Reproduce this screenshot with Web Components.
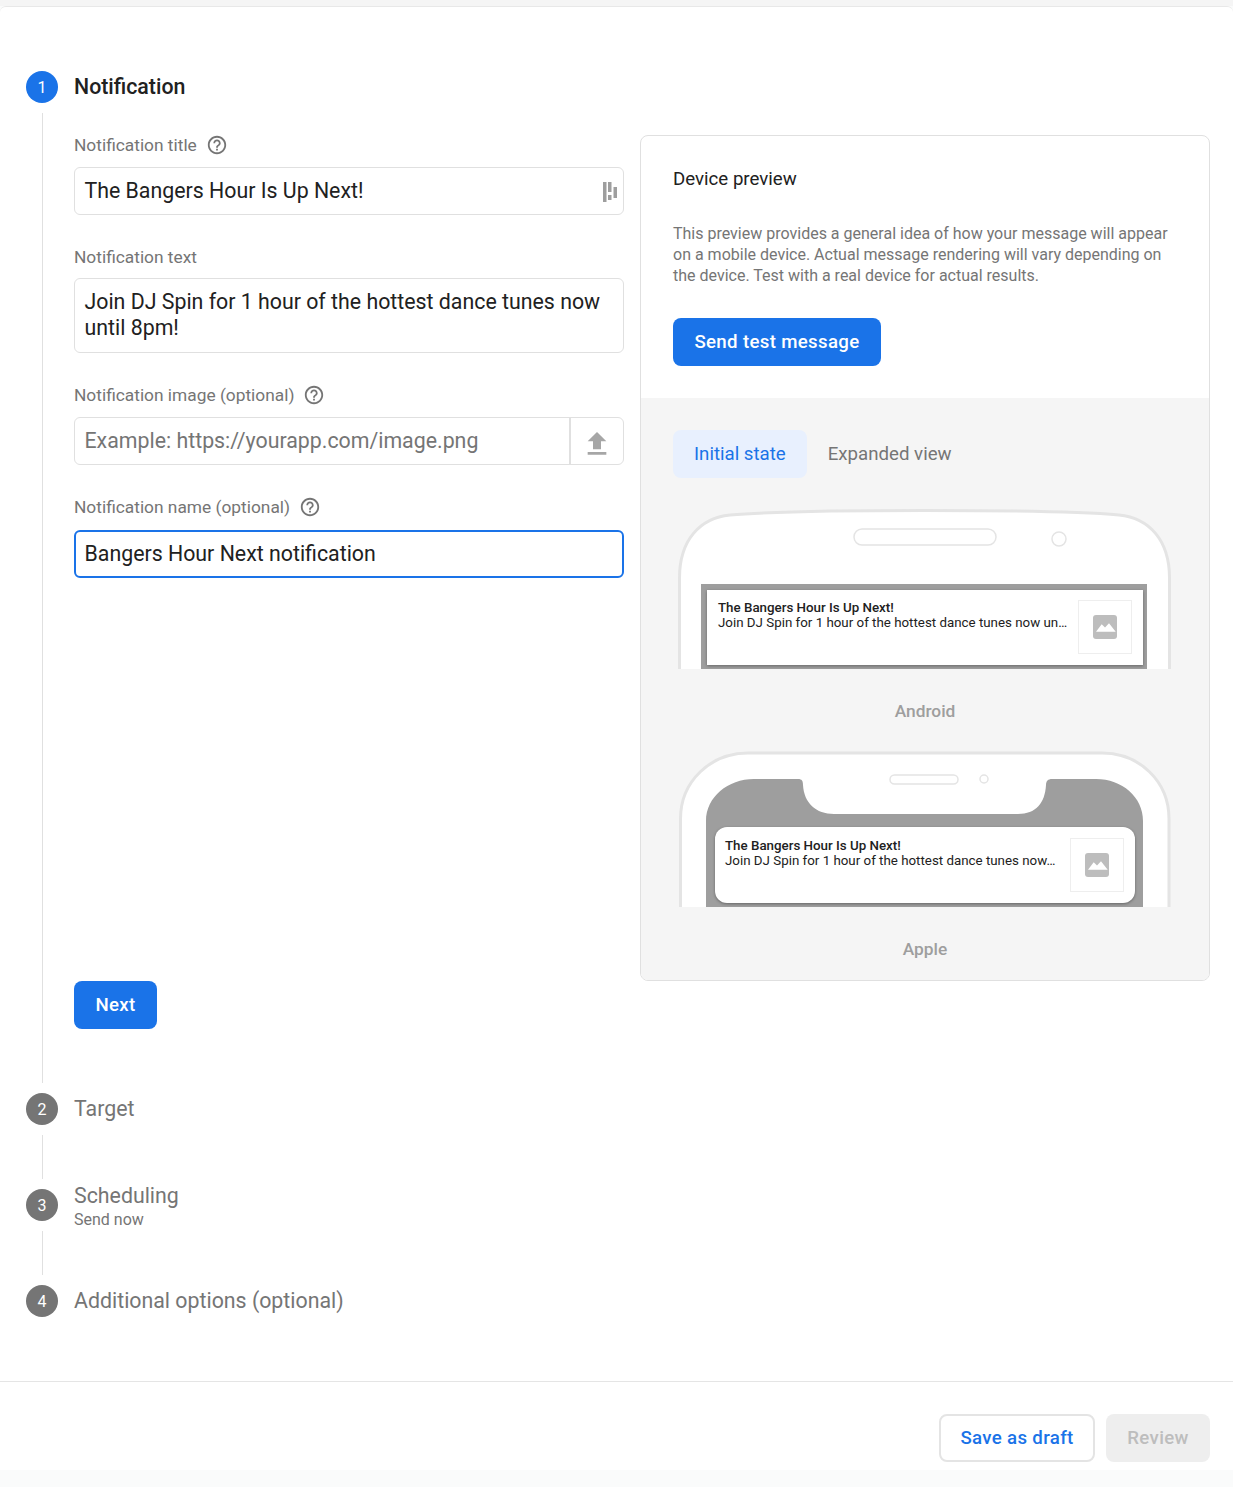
<!DOCTYPE html>
<html>
<head>
<meta charset="utf-8">
<style>
  html, body { margin: 0; padding: 0; }
  body { background: #fafbfb; font-family: Roboto, "Liberation Sans", sans-serif; color: #212121; height: 1487px; overflow: hidden; }
  .strip { height: 6px; background: #f5f5f5; }
  .card { background: #fff; border-top: 1px solid #e8e8e8; border-radius: 6px 6px 0 0; height: 1463px; display: flex; flex-direction: column; }
  .steps { padding-top: 64px; height: 1310px; box-sizing: content-box; }
  .form { width: 550px; }
  .row { display: flex; gap: 16px; height: 846px; align-items: stretch; }
  .foot { border-top: 1px solid #e5e5e5; display: flex; justify-content: flex-end; gap: 11px; padding: 32px 23px 0 0; }
</style>
</head>
<body>
<div class="strip"></div>
<div class="card">
  <div class="steps">
    <step-item num="1" label="Notification" active line="970">
      <div class="row">
        <div class="form">
          <form-field label="Notification title" help>
            <text-box value="The Bangers Hour Is Up Next!" mark></text-box>
          </form-field>
          <form-field label="Notification text" style="--label-gap:11px">
            <text-box value="Join DJ Spin for 1 hour of the hottest dance tunes now until 8pm!" multi></text-box>
          </form-field>
          <form-field label="Notification image (optional)" help>
            <text-box value="Example: https://yourapp.com/image.png" placeholder upload></text-box>
          </form-field>
          <form-field label="Notification name (optional)" help style="--label-gap:13px">
            <text-box value="Bangers Hour Next notification" focus></text-box>
          </form-field>
        </div>
        <device-preview></device-preview>
      </div>
      <app-button kind="primary" style="width:83px">Next</app-button>
    </step-item>
    <step-item num="2" label="Target" line="44"></step-item>
    <step-item num="3" label="Scheduling" sub="Send now" line="44"></step-item>
    <step-item num="4" label="Additional options (optional)"></step-item>
  </div>
  <div class="foot">
    <app-button kind="outline" style="width:156px">Save as draft</app-button>
    <app-button kind="disabled" style="width:104px">Review</app-button>
  </div>
</div>

<script>
const HELP = 'M11 18h2v-2h-2v2zm1-16C6.48 2 2 6.48 2 12s4.48 10 10 10 10-4.48 10-10S17.52 2 12 2zm0 18c-4.41 0-8-3.59-8-8s3.59-8 8-8 8 3.59 8 8-3.59 8-8 8zm0-14c-2.21 0-4 1.79-4 4h2c0-1.1.9-2 2-2s2 .9 2 2c0 2-3 1.75-3 5h2c0-2.25 3-2.5 3-5 0-2.21-1.79-4-4-4z';

class StepItem extends HTMLElement {
  connectedCallback() {
    const active = this.hasAttribute('active');
    const line = this.getAttribute('line');
    const sub = this.getAttribute('sub');
    this.attachShadow({ mode: 'open' });
    this.shadowRoot.innerHTML = `
      <style>
        :host { display: block; }
        .head { display: flex; align-items: center; gap: 16px; height: 32px; margin-left: 26px; }
        .num { width: 32px; height: 32px; border-radius: 50%; flex: none; display: flex; align-items: center; justify-content: center;
          background: ${active ? '#1a73e8' : '#757575'}; color: #fff; font-size: 16px; }
        .title { font-size: 21.33px; line-height: 26px; color: ${active ? '#212121' : '#757575'}; font-weight: ${active ? 500 : 400}; }
        .sub { font-size: 16px; line-height: 21px; color: #757575; }
        .stack { padding-top: 3px; }
        .body { margin: 10px 0 10px 42px; border-left: 1px solid #e0e0e0; padding: ${active ? '22px 0 54px 31px' : '0'}; box-sizing: border-box; }
      </style>
      <div class="head">
        <div class="num">${this.getAttribute('num')}</div>
        <div class="${sub ? 'stack' : ''}">
          <div class="title">${this.getAttribute('label')}</div>
          ${sub ? `<div class="sub">${sub}</div>` : ''}
        </div>
      </div>
      ${line ? `<div class="body" style="height:${line}px"><slot></slot></div>` : ''}
    `;
  }
}
customElements.define('step-item', StepItem);

class FormField extends HTMLElement {
  connectedCallback() {
    this.attachShadow({ mode: 'open' });
    this.shadowRoot.innerHTML = `
      <style>
        :host { display: block; margin-bottom: 32px; }
        .label { display: flex; align-items: center; gap: 9px; height: 20px; margin-bottom: var(--label-gap, 12px); font-size: 17.33px; color: #757575; }
        svg { width: 22px; height: 22px; fill: #757575; flex: none; }
      </style>
      <div class="label">
        <span>${this.getAttribute('label')}</span>
        ${this.hasAttribute('help') ? `<svg viewBox="0 0 24 24"><path d="${HELP}"/></svg>` : ''}
      </div>
      <slot></slot>
    `;
  }
}
customElements.define('form-field', FormField);

class TextBox extends HTMLElement {
  connectedCallback() {
    const focus = this.hasAttribute('focus');
    const multi = this.hasAttribute('multi');
    const mark = `<svg class="mark" viewBox="0 0 14 20" width="14" height="20"><path d="M0 0h3.500v20H0zM5 0h3.500v10H5zM5 13h3.500v5H5zM10.500 5H14v11h-3.500z"/></svg>`;
    const upload = `<div class="upload"><svg viewBox="0 0 24 24" width="32" height="32"><path d="M9 16h6v-6h4l-7-7-7 7h4zm-4 2h14v2H5z"/></svg></div>`;
    this.attachShadow({ mode: 'open' });
    this.shadowRoot.innerHTML = `
      <style>
        :host { display: flex; box-sizing: border-box; width: 550px; height: ${multi ? 75 : 48}px; border-radius: 6px; position: relative;
          border: ${focus ? '2px solid #1a73e8' : '1px solid #e0e0e0'}; background: #fff; }
        .text { flex: 1; padding: ${multi ? '10px' : '0'} 10px 0 ${focus ? 8.5 : 9.5}px; font-size: 21.33px; line-height: 26px; letter-spacing: 0;
          color: ${this.hasAttribute('placeholder') ? '#757575' : '#212121'}; ${multi ? '' : 'align-self: center;'} }
        .mark { position: absolute; right: 6px; top: 14px; fill: #9e9e9e; }
        .upload { width: 54px; border-left: 2px solid #e0e0e0; display: flex; align-items: center; justify-content: center; box-sizing: border-box; }
        .upload svg { fill: #a6a6a6; margin-top: 6px; }
      </style>
      <div class="text">${this.getAttribute('value')}</div>
      ${this.hasAttribute('mark') ? mark : ''}
      ${this.hasAttribute('upload') ? upload : ''}
    `;
  }
}
customElements.define('text-box', TextBox);

class AppButton extends HTMLElement {
  connectedCallback() {
    const styles = {
      primary: 'background:#1a73e8;color:#fff;',
      outline: 'background:#fff;color:#1a73e8;border:2px solid #e4e4e4;box-sizing:border-box;',
      disabled: 'background:#eeeeee;color:#bdbdbd;'
    };
    this.attachShadow({ mode: 'open' });
    this.shadowRoot.innerHTML = `
      <style>
        :host { display: flex; align-items: center; justify-content: center; height: 48px; border-radius: 8px; font-size: 18.67px; font-weight: 500;
          letter-spacing: 0.33px; ${styles[this.getAttribute('kind')]} }
      </style>
      <slot></slot>
    `;
  }
}
customElements.define('app-button', AppButton);

class NotifCard extends HTMLElement {
  connectedCallback() {
    this.attachShadow({ mode: 'open' });
    this.shadowRoot.innerHTML = `
      <style>
        :host { display: flex; position: absolute; box-sizing: border-box; background: #fff; color: #212121; font-size: 13.33px; line-height: 15px;
          box-shadow: 0 1px 3px rgba(0,0,0,.35); }
        .txt { flex: 1; min-width: 0; }
        .t { font-weight: 500; }
        .thumb { flex: none; width: 54px; height: 54px; box-sizing: border-box; border: 1px solid #eeeeee; display: flex; align-items: center; justify-content: center; }
      </style>
      <div class="txt">
        <div class="t">The Bangers Hour Is Up Next!</div>
        <div>${this.getAttribute('body')}</div>
      </div>
      <div class="thumb">
        <svg viewBox="0 0 24 24" width="24" height="24">
          <rect width="24" height="24" rx="3" fill="#bdbdbd"/>
          <path d="M3 16.700L8.700 9.300 12 12.500 16 8.300 22.700 16.700z" fill="#fff"/>
        </svg>
      </div>
    `;
  }
}
customElements.define('notif-card', NotifCard);

class PhoneAndroid extends HTMLElement {
  connectedCallback() {
    this.attachShadow({ mode: 'open' });
    this.shadowRoot.innerHTML = `
      <style>
        :host { display: block; position: relative; width: 494px; height: 161px; }
        svg { display: block; }
        notif-card { left: 29px; top: 82px; width: 436px; height: 75px; padding: 10px 11px 0 11px; }
      </style>
      <svg width="494" height="161" viewBox="0 0 494 161">
        <path d="M1.500 161V70C1.500 32 22 10 52 7 120 1 373 1 441 7 471 10 491.500 32 491.500 70V161" fill="#fff" stroke="#e4e4e4" stroke-width="3"/>
        <rect x="176" y="21" width="142" height="16" rx="8" fill="#fff" stroke="#e4e4e4" stroke-width="1.500"/>
        <circle cx="381" cy="31" r="7" fill="#fff" stroke="#e4e4e4" stroke-width="1.500"/>
        <rect x="23" y="76" width="446" height="85" fill="#9e9e9e"/>
      </svg>
      <notif-card body="Join DJ Spin for 1 hour of the hottest dance tunes now un…"></notif-card>
    `;
  }
}
customElements.define('phone-android', PhoneAndroid);

class PhoneApple extends HTMLElement {
  connectedCallback() {
    this.attachShadow({ mode: 'open' });
    this.shadowRoot.innerHTML = `
      <style>
        :host { display: block; position: relative; width: 494px; height: 156px; }
        svg { display: block; }
        notif-card { left: 37px; top: 76px; width: 420px; height: 76px; padding: 11px 11px 0 10px; border-radius: 12px; }
      </style>
      <svg width="494" height="156" viewBox="0 0 494 156">
        <path d="M2.500 156V68C2.500 30 33 2 70 2H424C461 2 491 30 491 68V156" fill="#fff" stroke="#e4e4e4" stroke-width="3"/>
        <path d="M28 156V70C28 46 50 28 76 28H120C124 28 125 30 125 34 126 52 138 63 156 63H340C358 63 367 52 368 34 368 30 370 28 374 28H418C444 28 465 46 465 70V156z" fill="#9e9e9e"/>
        <rect x="212" y="24" width="68" height="9" rx="4.500" fill="#fff" stroke="#e4e4e4" stroke-width="1.500"/>
        <circle cx="306" cy="28" r="4" fill="#fff" stroke="#e4e4e4" stroke-width="1.500"/>
      </svg>
      <notif-card body="Join DJ Spin for 1 hour of the hottest dance tunes now…"></notif-card>
    `;
  }
}
customElements.define('phone-apple', PhoneApple);

class DevicePreview extends HTMLElement {
  connectedCallback() {
    this.attachShadow({ mode: 'open' });
    this.shadowRoot.innerHTML = `
      <style>
        :host { display: block; box-sizing: border-box; width: 570px; height: 846px; border: 1px solid #e0e0e0; border-radius: 8px; overflow: hidden; background: #fff; }
        .top { height: 262px; box-sizing: border-box; padding: 32px 32px 0; }
        h2 { margin: 0 0 33px; font-size: 18.67px; line-height: 22px; font-weight: 400; color: #212121; }
        p { margin: 0 0 32px; font-size: 16px; line-height: 21px; color: #757575; }
        app-button { width: 208px; }
        .bottom { background: #f5f5f5; height: 583px; box-sizing: border-box; padding: 32px 0 0 32px; }
        .tabs { display: flex; align-items: center; height: 48px; margin-bottom: 30px; font-size: 18.67px; }
        .tab { height: 48px; display: flex; align-items: center; padding: 0 21px; border-radius: 8px; color: #757575; }
        .tab.on { background: #e8f0fe; color: #1a73e8; }
        phone-android, phone-apple { margin-left: 5px; }
        .os { width: 504px; text-align: center; font-size: 17.33px; font-weight: 500; color: #9e9e9e; line-height: 24px; }
      </style>
      <div class="top">
        <h2>Device preview</h2>
        <p>This preview provides a general idea of how your message will appear on a mobile device. Actual message rendering will vary depending on the device. Test with a real device for actual results.</p>
        <app-button kind="primary">Send test message</app-button>
      </div>
      <div class="bottom">
        <div class="tabs"><div class="tab on">Initial state</div><div class="tab">Expanded view</div></div>
        <phone-android></phone-android>
        <div class="os" style="margin:30px 0 28px">Android</div>
        <phone-apple></phone-apple>
        <div class="os" style="margin-top:30px">Apple</div>
      </div>
    `;
  }
}
customElements.define('device-preview', DevicePreview);
</script>
</body>
</html>
